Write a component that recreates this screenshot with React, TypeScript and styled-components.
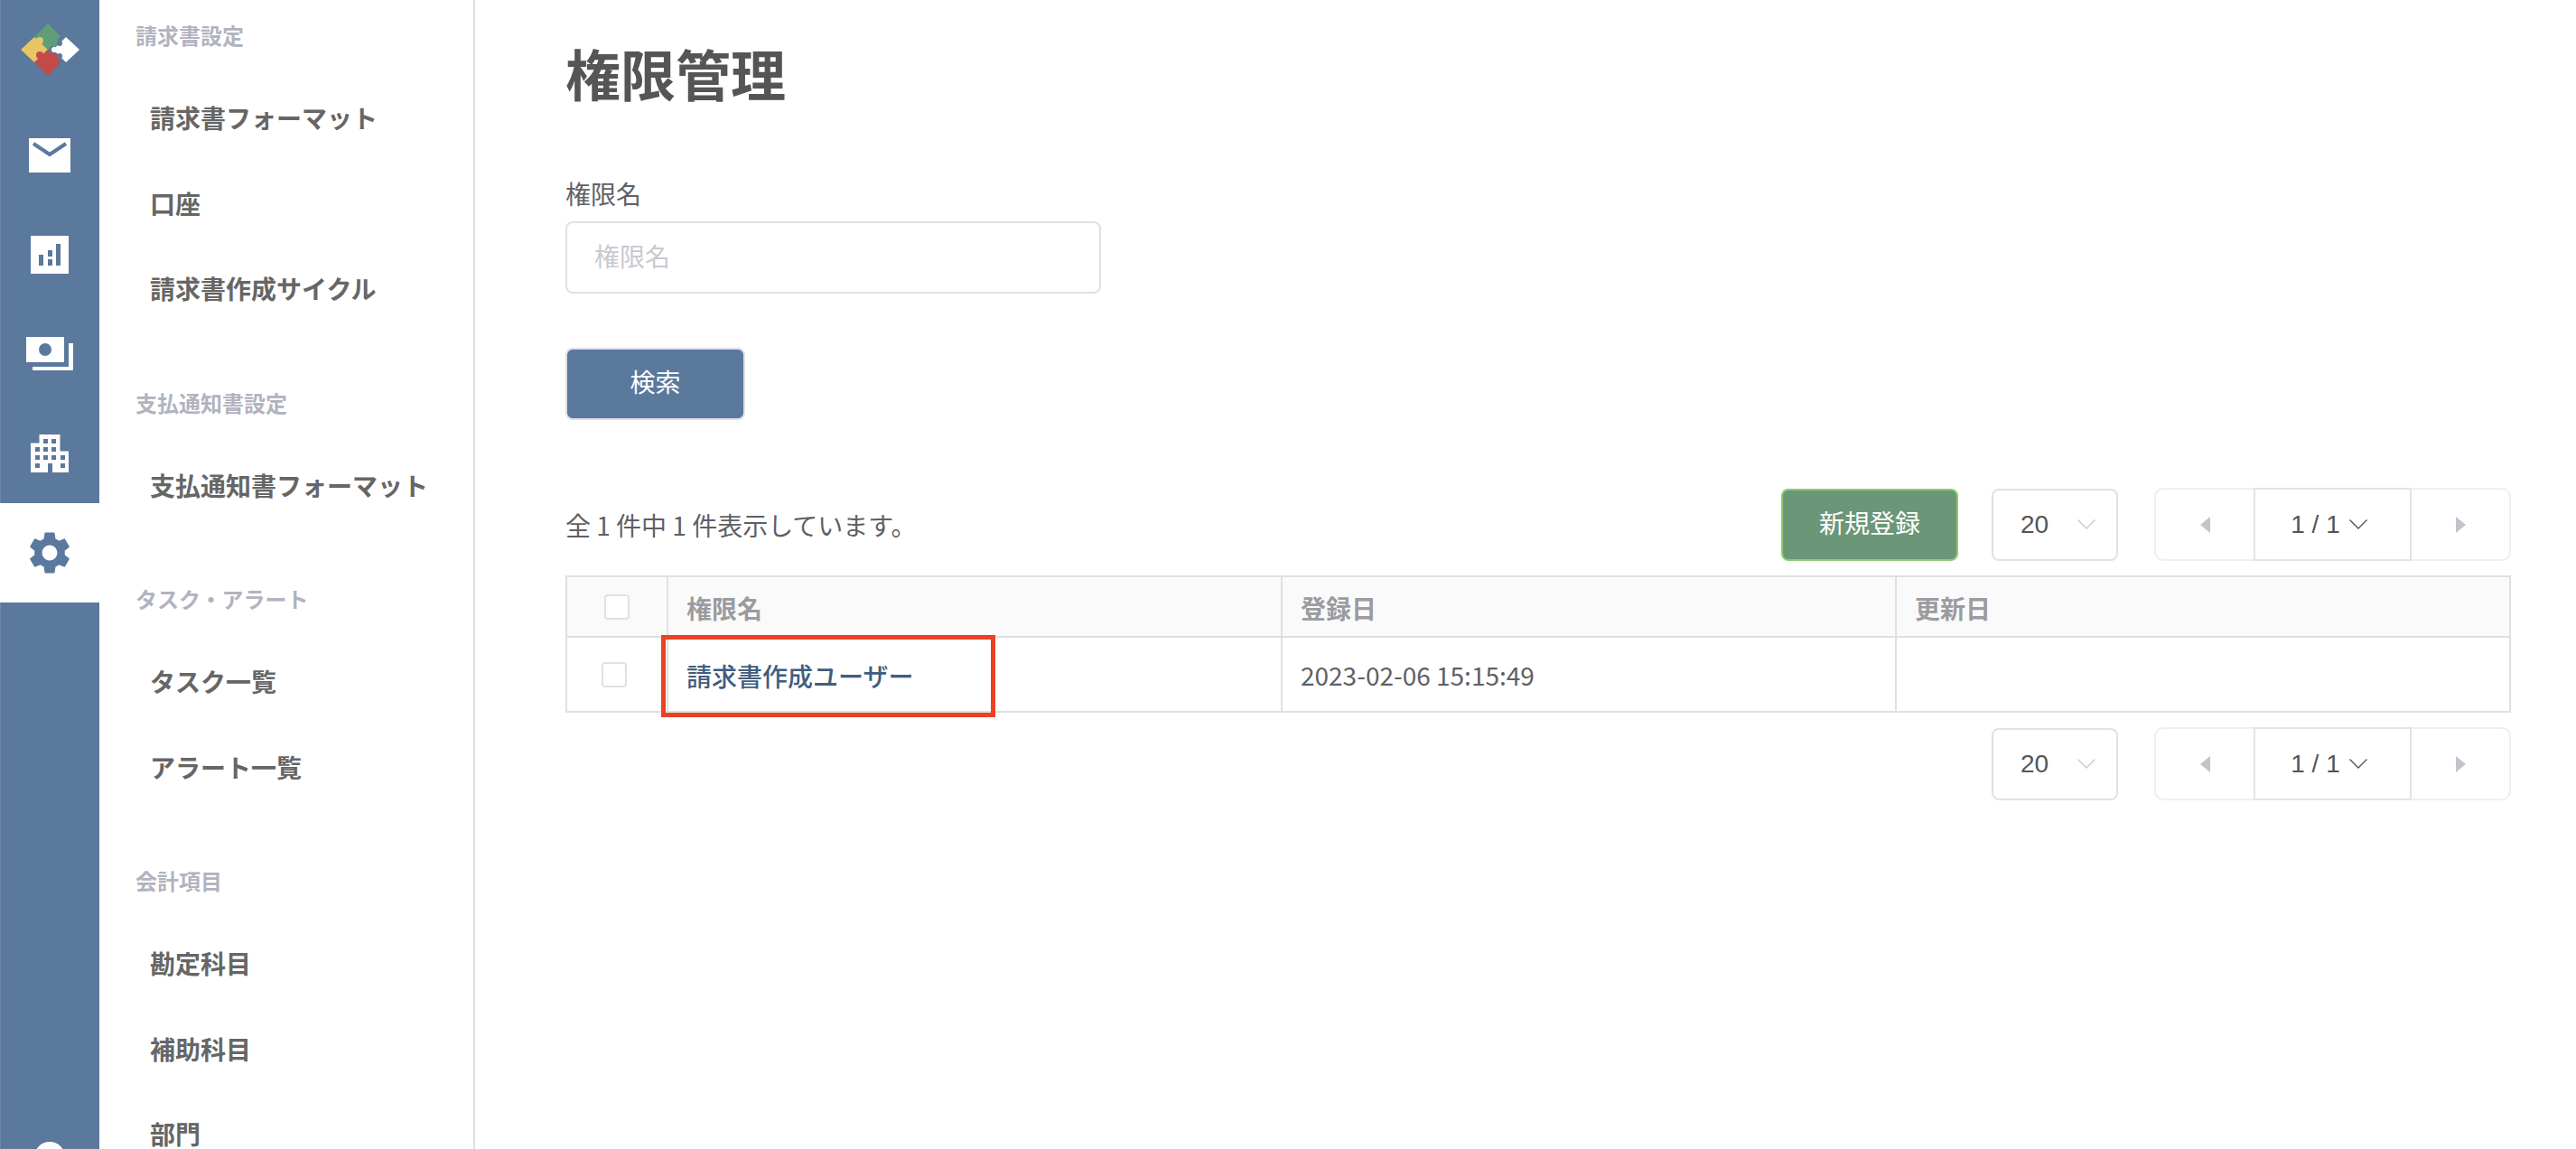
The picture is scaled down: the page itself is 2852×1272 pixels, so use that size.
import React from 'react';
import styled, { createGlobalStyle } from 'styled-components';
import { MdSettings } from 'react-icons/md';

const GlobalStyle = createGlobalStyle`
  html, body {
    margin: 0;
    padding: 0;
    height: 100%;
    overflow: hidden;
    background: #fff;
  }
  body {
    font-family: "Noto Sans CJK JP", "Noto Sans", sans-serif;
    color: #5f6066;
  }
  * {
    box-sizing: border-box;
  }
`;

const Page = styled.div`
  display: flex;
  height: 1272px;
  overflow: hidden;
`;

const Rail = styled.nav`
  width: 110px;
  flex: none;
  display: flex;
  flex-direction: column;
  background: #5b789d;
  box-shadow: inset 1px 0 0 #6f89aa;
  overflow: hidden;
`;

const LogoCell = styled.div`
  height: 117px;
  flex: none;
  padding: 26px 0 0 23px;
  svg {
    display: block;
  }
`;

const RailItem = styled.a<{ $active?: boolean }>`
  height: 110px;
  flex: none;
  display: flex;
  align-items: center;
  justify-content: center;
  background: ${(p) => (p.$active ? '#fff' : 'transparent')};
  color: ${(p) => (p.$active ? '#5b789d' : '#fff')};
`;

const Avatar = styled.div`
  width: 34px;
  height: 34px;
  flex: none;
  margin: 597px 0 0 38px;
  border-radius: 50%;
  background: #fff;
`;

const SubNav = styled.nav`
  width: 416px;
  flex: none;
  padding: 22px 0 0 40px;
  border-right: 2px solid #dedede;
  overflow: hidden;
`;

const GroupTitle = styled.div`
  height: 34px;
  line-height: 34px;
  font-size: 24px;
  font-weight: 700;
  color: #b1b3bf;
  margin-top: 62px;
  &:first-child {
    margin-top: 0;
  }
`;

const GroupList = styled.ul`
  list-style: none;
  margin: 27px 0 0;
  padding: 0;
`;

const GroupItem = styled.li`
  height: 94.5px;
  line-height: 94.5px;
  padding-left: 16px;
  font-size: 28px;
  font-weight: 700;
  color: #666;
`;

const Main = styled.main`
  flex: 1;
  min-width: 0;
  padding: 42px 72px 0 100px;
`;

const Title = styled.h1`
  margin: 0;
  height: 80px;
  line-height: 78px;
  font-size: 61px;
  font-weight: 700;
  color: #555;
`;

const FieldLabel = styled.label`
  display: block;
  margin-top: 73px;
  height: 40px;
  line-height: 38px;
  font-size: 28px;
  color: #5f6066;
`;

const TextInput = styled.input`
  display: block;
  width: 593px;
  height: 80px;
  margin-top: 10px;
  padding: 0 30px 5px;
  border: 2px solid #dfdfe6;
  border-radius: 8px;
  outline: none;
  font: 28px "Noto Sans CJK JP", sans-serif;
  &::placeholder {
    color: #c8c9d0;
    opacity: 1;
  }
`;

const Button = styled.button<{ $tone: 'blue' | 'green' }>`
  display: block;
  height: 80px;
  width: ${(p) => (p.$tone === 'blue' ? '199px' : '196px')};
  padding: 0 0 6px;
  border-radius: 8px;
  border: 2px solid ${(p) => (p.$tone === 'blue' ? '#dfdfe6' : '#8ccb6e')};
  background: ${(p) => (p.$tone === 'blue' ? '#5b789d' : '#6b9778')};
  color: #fff;
  font: 28px "Noto Sans CJK JP", sans-serif;
`;

const SearchButton = styled(Button)`
  margin-top: 60px;
`;

const Toolbar = styled.div`
  display: flex;
  align-items: center;
  margin-top: 75px;
  height: 81px;
`;

const Count = styled.div`
  flex: 1;
  font-size: 28px;
  line-height: 40px;
  padding-top: 1px;
  color: #5f6066;
`;

const Select = styled.div<{ $left: number }>`
  width: 140px;
  height: 80px;
  margin-left: ${(p) => p.$left}px;
  padding: 0 0 0 30px;
  display: flex;
  align-items: center;
  gap: 32px;
  border: 2px solid #e0e0e7;
  border-radius: 8px;
  font: 28px "Liberation Sans", Arial, sans-serif;
  color: #555;
`;

const Pager = styled.div`
  display: flex;
  width: 395px;
  height: 81px;
  margin-left: 40px;
  border: 2px solid #eeeef3;
  border-radius: 10px;
`;

const PagerSide = styled.div`
  flex: 1;
  display: flex;
  align-items: center;
  justify-content: center;
  color: #c2c4cc;
`;

const PagerMiddle = styled.div`
  width: 175px;
  flex: none;
  margin: -2px 0;
  padding-right: 8px;
  display: flex;
  align-items: center;
  justify-content: center;
  gap: 10px;
  border: 2px solid #e3e3ea;
  font: 28px "Liberation Sans", Arial, sans-serif;
  color: #555;
`;

const Table = styled.table`
  width: 2154px;
  margin-top: 16px;
  table-layout: fixed;
  border-collapse: collapse;
  border: 2px solid #e0e0e0;
`;

const HeadCell = styled.th<{ $width?: number }>`
  width: ${(p) => (p.$width ? `${p.$width}px` : 'auto')};
  height: 67px;
  padding: 2px 0 0 20px;
  border: 2px solid #e0e0e0;
  background: #fafafa;
  text-align: left;
  font-size: 28px;
  font-weight: 700;
  color: #9b9ba0;
`;

const CheckHead = styled(HeadCell)`
  padding: 0 0 0 41px;
`;

const BodyCell = styled.td`
  position: relative;
  height: 83px;
  padding: 0 0 0 20px;
  border: 2px solid #e0e0e0;
  font-size: 28px;
  color: #5f6066;
`;

const CheckCell = styled(BodyCell)`
  padding: 0 0 0 38px;
`;

const Check = styled.span`
  display: block;
  width: 28px;
  height: 28px;
  border: 2px solid #e0e0e7;
  border-radius: 4px;
  background: #fff;
`;

const NameLink = styled.a`
  display: inline-block;
  padding-top: 2px;
  color: #3f5d80;
  font-weight: 500;
`;

const Highlight = styled.div`
  position: absolute;
  left: -8px;
  top: -3px;
  width: 370px;
  height: 91px;
  border: 5px solid #eb4124;
  pointer-events: none;
`;

const Footer = styled.div`
  display: flex;
  justify-content: flex-end;
  align-items: center;
  margin-top: 16px;
  height: 81px;
`;

const Chevron = ({ color }: { color: string }) => (
  <svg width="20" height="11" viewBox="0 0 20 11" fill="none">
    <path d="M0.5 0.5 L10 10 L19.5 0.5" stroke={color} strokeWidth="1.4" />
  </svg>
);

const Arrow = ({ dir }: { dir: 'left' | 'right' }) => (
  <svg width="11" height="18" viewBox="0 0 11 18">
    <path d={dir === 'left' ? 'M11 0 V18 L0 9 Z' : 'M0 0 V18 L11 9 Z'} fill="currentColor" />
  </svg>
);

const Logo = () => (
  <svg width="66" height="58" viewBox="0 0 66 58">
    <path d="M30 0 L44 14 L30 29 L15 15 Z" fill="#5f9e78" />
    <circle cx="37" cy="21" r="5" fill="#5f9e78" />
    <path d="M15 15 L30 29 L15 43 L0 29 Z" fill="#e9c564" />
    <circle cx="21" cy="19" r="4" fill="#e9c564" />
    <path d="M30 29 L44 43 L30 58 L15 43 Z" fill="#c24a48" />
    <circle cx="21" cy="35" r="4" fill="#c24a48" />
    <circle cx="38" cy="37" r="4" fill="#c24a48" />
    <path d="M50 15 L65 29 L50 43 L36 29 Z" fill="#fff" />
    <circle cx="43" cy="22" r="3" fill="#5b789d" />
    <circle cx="43" cy="36" r="3" fill="#5b789d" />
    <circle cx="37" cy="29" r="3" fill="#fff" />
  </svg>
);

const MailIcon = () => (
  <svg width="46" height="38" viewBox="0 0 46 38">
    <rect width="46" height="38" fill="#fff" />
    <path d="M5 6 L23 18 L41 6" fill="none" stroke="#5b789d" strokeWidth="4" />
  </svg>
);

const ChartIcon = () => (
  <svg width="42" height="42" viewBox="0 0 42 42">
    <rect width="42" height="42" fill="#fff" />
    <rect x="9" y="21" width="5" height="12" fill="#5b789d" />
    <rect x="19" y="16" width="5" height="7" fill="#5b789d" />
    <rect x="19" y="26" width="5" height="7" fill="#5b789d" />
    <rect x="28" y="9" width="5" height="24" fill="#5b789d" />
  </svg>
);

const MoneyIcon = () => (
  <svg width="52" height="38" viewBox="0 0 52 38">
    <rect width="42" height="28" fill="#fff" />
    <circle cx="21" cy="14" r="7" fill="#5b789d" />
    <path d="M47 7 H52 V37 H7 V33 H47 Z" fill="#fff" />
  </svg>
);

const BuildingIcon = () => (
  <svg width="42" height="42" viewBox="0 0 42 42">
    <path d="M0 9.5 H9.5 V0 H32.5 V18.5 H42 V42 H0 Z" fill="#fff" />
    {[
      [14, 5], [23, 5],
      [5, 14], [14, 14], [23, 14],
      [5, 23], [14, 23], [23, 23], [33, 23],
      [5, 32], [33, 32],
    ].map(([x, y]) => (
      <rect key={`${x}-${y}`} x={x} y={y} width="5" height="5" fill="#5b789d" />
    ))}
    <rect x="19" y="32" width="5" height="10" fill="#5b789d" />
  </svg>
);

const navGroups = [
  { title: '請求書設定', items: ['請求書フォーマット', '口座', '請求書作成サイクル'] },
  { title: '支払通知書設定', items: ['支払通知書フォーマット'] },
  { title: 'タスク・アラート', items: ['タスク一覧', 'アラート一覧'] },
  { title: '会計項目', items: ['勘定科目', '補助科目', '部門'] },
];

const PageSize = ({ left }: { left: number }) => (
  <Select $left={left}>
    20
    <Chevron color="#c8c9d0" />
  </Select>
);

const Pagination = () => (
  <Pager>
    <PagerSide>
      <Arrow dir="left" />
    </PagerSide>
    <PagerMiddle>
      1 / 1
      <Chevron color="#555" />
    </PagerMiddle>
    <PagerSide>
      <Arrow dir="right" />
    </PagerSide>
  </Pager>
);

export default function App() {
  return (
    <Page>
      <GlobalStyle />
      <Rail>
        <LogoCell>
          <Logo />
        </LogoCell>
        <RailItem><MailIcon /></RailItem>
        <RailItem><ChartIcon /></RailItem>
        <RailItem><MoneyIcon /></RailItem>
        <RailItem><BuildingIcon /></RailItem>
        <RailItem $active><MdSettings size={56} /></RailItem>
        <Avatar />
      </Rail>
      <SubNav>
        {navGroups.map((group) => (
          <React.Fragment key={group.title}>
            <GroupTitle>{group.title}</GroupTitle>
            <GroupList>
              {group.items.map((item) => (
                <GroupItem key={item}>{item}</GroupItem>
              ))}
            </GroupList>
          </React.Fragment>
        ))}
      </SubNav>
      <Main>
        <Title>権限管理</Title>
        <FieldLabel>権限名</FieldLabel>
        <TextInput placeholder="権限名" />
        <SearchButton $tone="blue">検索</SearchButton>
        <Toolbar>
          <Count>全 1 件中 1 件表示しています。</Count>
          <Button $tone="green">新規登録</Button>
          <PageSize left={37} />
          <Pagination />
        </Toolbar>
        <Table>
          <thead>
            <tr>
              <CheckHead $width={112}><Check /></CheckHead>
              <HeadCell $width={680}>権限名</HeadCell>
              <HeadCell $width={680}>登録日</HeadCell>
              <HeadCell>更新日</HeadCell>
            </tr>
          </thead>
          <tbody>
            <tr>
              <CheckCell><Check /></CheckCell>
              <BodyCell>
                <NameLink>請求書作成ユーザー</NameLink>
                <Highlight />
              </BodyCell>
              <BodyCell>2023-02-06 15:15:49</BodyCell>
              <BodyCell />
            </tr>
          </tbody>
        </Table>
        <Footer>
          <PageSize left={0} />
          <Pagination />
        </Footer>
      </Main>
    </Page>
  );
}
